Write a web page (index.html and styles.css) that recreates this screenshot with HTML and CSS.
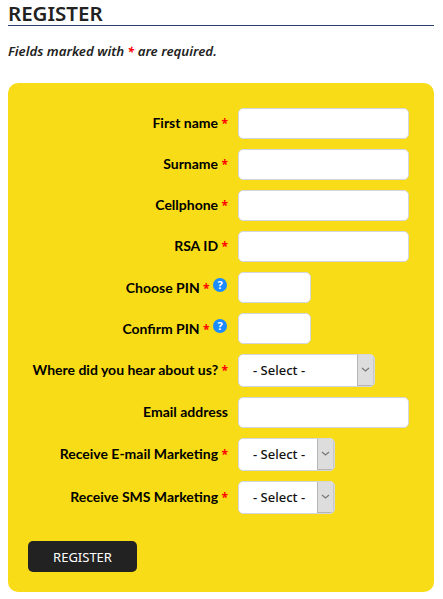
FILE: index.html
```html
<!DOCTYPE html>
<html lang="en">
<head>
<meta charset="utf-8">
<title>Register</title>
<link rel="stylesheet" href="styles.css">
</head>
<body>
<h1 class="title">REGISTER</h1>
<p class="note">Fields marked with <span class="req">*</span> are required.</p>
<form class="panel">
  <div class="row"><label class="label">First name <span class="req">*</span></label><input class="field wide" type="text"></div>
  <div class="row"><label class="label">Surname <span class="req">*</span></label><input class="field wide" type="text"></div>
  <div class="row"><label class="label">Cellphone <span class="req">*</span></label><input class="field wide" type="text"></div>
  <div class="row"><label class="label">RSA ID <span class="req">*</span></label><input class="field wide" type="text"></div>
  <div class="row"><label class="label">Choose PIN <span class="req">*</span> <span class="help">?</span></label><input class="field pin" type="password"></div>
  <div class="row"><label class="label">Confirm PIN <span class="req">*</span> <span class="help">?</span></label><input class="field pin" type="password"></div>
  <div class="row row-select"><label class="label">Where did you hear about us? <span class="req">*</span></label>
    <div class="select select-long"><span class="select-text">- Select -</span><span class="arrow"><svg width="9" height="5" viewBox="0 0 9 5"><path d="M1 1l3.5 3L8 1" fill="none" stroke="#777" stroke-width="1.2"/></svg></span></div></div>
  <div class="row"><label class="label">Email address</label><input class="field wide" type="text"></div>
  <div class="row row-select"><label class="label">Receive E-mail Marketing <span class="req">*</span></label>
    <div class="select select-short"><span class="select-text">- Select -</span><span class="arrow"><svg width="9" height="5" viewBox="0 0 9 5"><path d="M1 1l3.5 3L8 1" fill="none" stroke="#777" stroke-width="1.2"/></svg></span></div></div>
  <div class="row row-select"><label class="label">Receive SMS Marketing <span class="req">*</span></label>
    <div class="select select-short"><span class="select-text">- Select -</span><span class="arrow"><svg width="9" height="5" viewBox="0 0 9 5"><path d="M1 1l3.5 3L8 1" fill="none" stroke="#777" stroke-width="1.2"/></svg></span></div></div>
  <button class="submit" type="button">REGISTER</button>
</form>
</body>
</html>
```
FILE: styles.css
```css
* { box-sizing: border-box; }
html, body { margin: 0; padding: 0; background: #fff; }
body {
  padding: 0 9px 0 8px;
  font-family: "Noto Sans", "Open Sans", sans-serif;
  color: #222;
}
.title {
  margin: 0;
  height: 26px;
  padding-top: 1px;
  font-size: 20.5px;
  line-height: 24px;
  font-weight: 600;
  color: #222;
  border-bottom: 1px solid #2c3e6b;
}
.note {
  margin: 16px 0 0;
  height: 18px;
  font-size: 13.3px;
  line-height: 18px;
  font-weight: 600;
  font-style: italic;
}
.req {
  font-family: "Noto Sans", sans-serif;
  font-size: 12px;
  line-height: 1;
  font-weight: 700;
  color: #f00;
}
.panel {
  margin-top: 23px;
  height: 509px;
  padding: 25px 20px 0;
  background: #f8dc17;
  border-radius: 10px;
}
.row {
  display: flex;
  align-items: center;
  height: 31px;
  margin-bottom: 10px;
}
.row-select { height: 32px; margin-bottom: 11px; }
.label {
  width: 200px;
  margin-top: -2px;
  margin-right: 10px;
  text-align: right;
  font-family: Lato, "Noto Sans", sans-serif;
  font-size: 14px;
  line-height: 17px;
  font-weight: 700;
  color: #000;
  white-space: nowrap;
}
.help {
  display: inline-block;
  width: 14px;
  height: 14px;
  margin-right: 1px;
  border-radius: 50%;
  background: #1a8cff;
  color: #fff;
  font-family: "Noto Sans", sans-serif;
  font-size: 11px;
  line-height: 14px;
  font-weight: 700;
  text-align: center;
  vertical-align: 4px;
}
.field {
  height: 31px;
  border: 1px solid #d3d6dc;
  border-radius: 5px;
  background: #fff;
  padding: 0 8px;
}
.wide { width: 171px; }
.pin { width: 73px; }
.select {
  display: flex;
  height: 33px;
  background: #fff;
  border: 1px solid #d3d6dc;
  border-radius: 5px;
  overflow: hidden;
}
.select-long { width: 137px; }
.select-short { width: 97px; }
.select-text {
  flex: 1;
  padding-left: 14px;
  font-size: 13px;
  font-weight: 500;
  line-height: 30px;
  color: #111;
  white-space: nowrap;
}
.arrow {
  display: flex;
  align-items: center;
  justify-content: center;
  width: 17px;
  background: #ddd;
  border-left: 1px solid #b5b5b5;
  border-right: 1px solid #c8c8c8;
  border-bottom: 1px solid #b5b5b5;
}
.submit {
  display: block;
  margin-top: 28px;
  width: 109px;
  height: 31px;
  padding: 0;
  border: 0;
  border-radius: 5px;
  background: #222;
  color: #fff;
  font-family: inherit;
  font-size: 13px;
}
```
